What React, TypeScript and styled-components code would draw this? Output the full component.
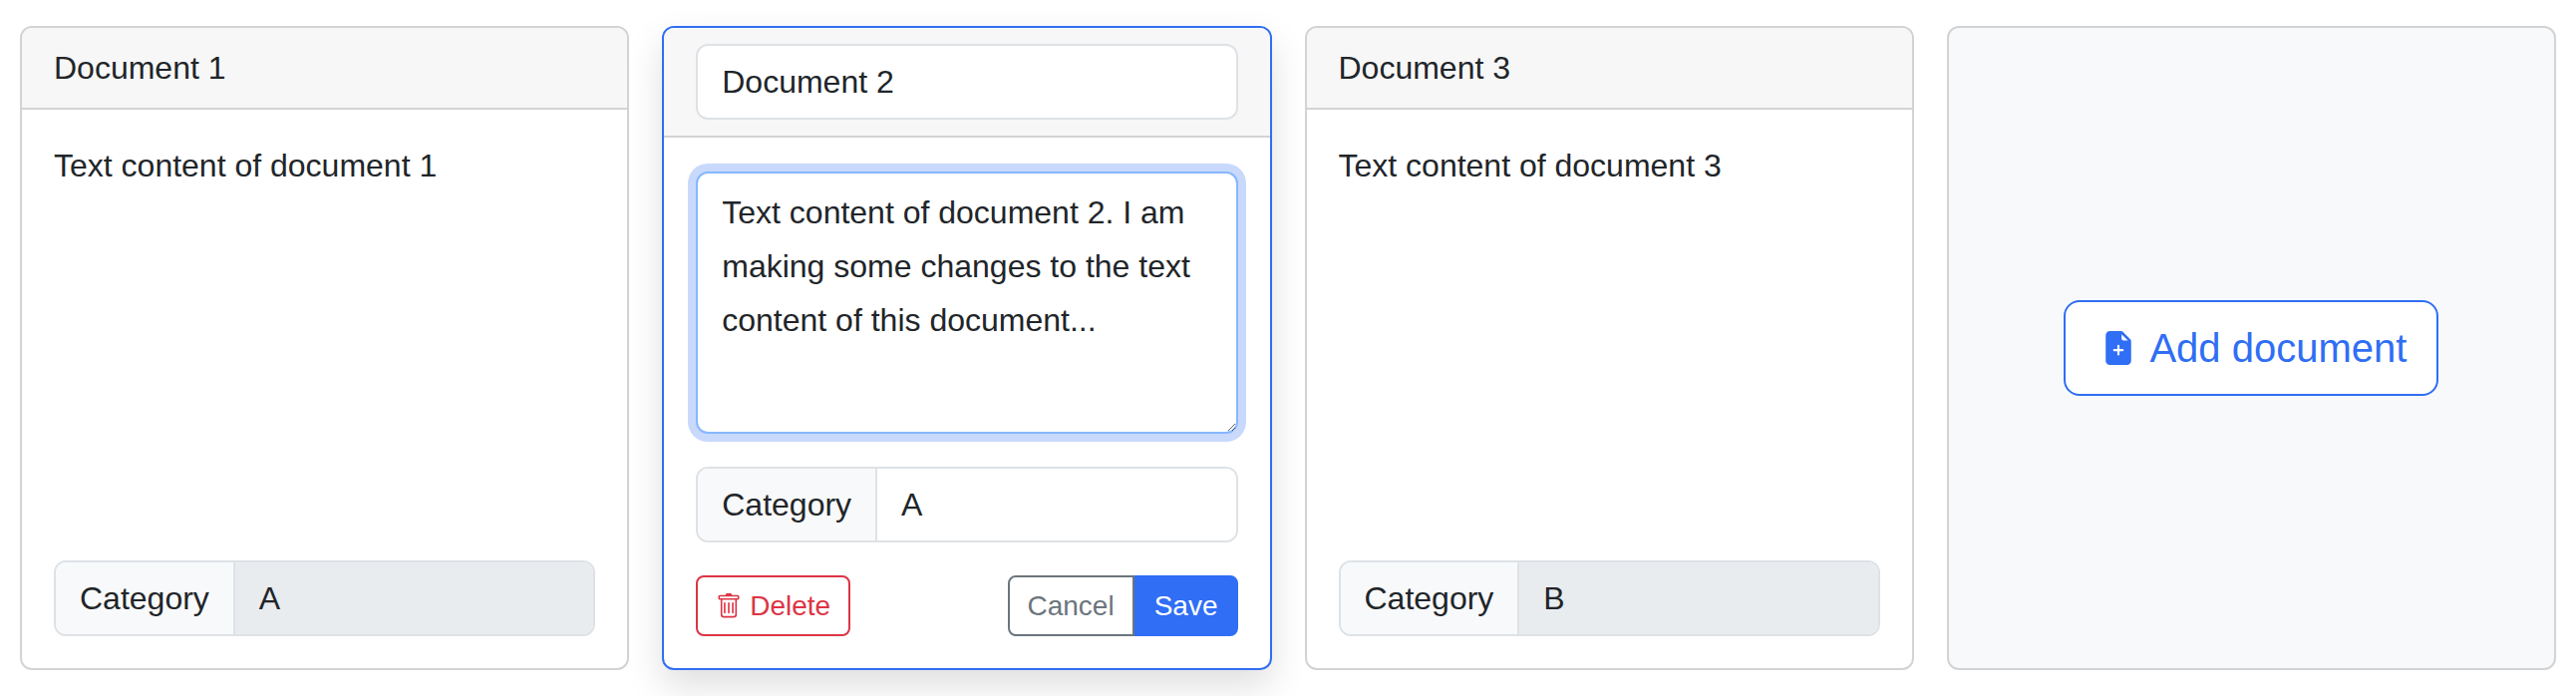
import React from "react";
import styled, { createGlobalStyle } from "styled-components";
import { BsTrash, BsFileEarmarkPlusFill } from "react-icons/bs";

const GlobalStyle = createGlobalStyle`
    body {
        margin: 0;
        background: #fff;
        font-family: "Liberation Sans", Arial, sans-serif;
        color: #212529;
    }
    * { box-sizing: border-box; }
`;

interface Doc {
    title: string;
    text: string;
    category: string;
}

const docs: Doc[] = [
    { title: "Document 1", text: "Text content of document 1", category: "A" },
    { title: "Document 2", text: "Text content of document 2. I am making some changes to the text content of this document...", category: "A" },
    { title: "Document 3", text: "Text content of document 3", category: "B" }
];

export default function App(): React.ReactElement {
    return (
        <>
            <GlobalStyle />
            <Grid>
                <Card>
                    <CardHeader>{docs[0].title}</CardHeader>
                    <CardBody>
                        <BodyText>{docs[0].text}</BodyText>
                        <CategoryGroup value={docs[0].category} disabled />
                    </CardBody>
                </Card>

                <Card $editing>
                    <CardHeader $editing>
                        <TitleInput defaultValue={docs[1].title} />
                    </CardHeader>
                    <CardBody>
                        <TextArea defaultValue={docs[1].text} />
                        <CategoryGroup value={docs[1].category} />
                        <ButtonRow>
                            <DeleteButton>
                                <BsTrash />
                                Delete
                            </DeleteButton>
                            <ButtonGroup>
                                <CancelButton>Cancel</CancelButton>
                                <SaveButton>Save</SaveButton>
                            </ButtonGroup>
                        </ButtonRow>
                    </CardBody>
                </Card>

                <Card>
                    <CardHeader>{docs[2].title}</CardHeader>
                    <CardBody>
                        <BodyText>{docs[2].text}</BodyText>
                        <CategoryGroup value={docs[2].category} disabled />
                    </CardBody>
                </Card>

                <AddCard>
                    <AddButton>
                        <BsFileEarmarkPlusFill />
                        Add document
                    </AddButton>
                </AddCard>
            </Grid>
        </>
    );
}

function CategoryGroup(props: { value: string; disabled?: boolean }): React.ReactElement {
    return (
        <InputGroup>
            <GroupLabel>Category</GroupLabel>
            <GroupValue $disabled={props.disabled}>{props.value}</GroupValue>
        </InputGroup>
    );
}

const Grid = styled.div`
    display: grid;
    grid-template-columns: repeat(4, 1fr);
    gap: 33px;
    padding: 26px 20px;
`;

const Card = styled.div<{ $editing?: boolean }>`
    display: flex;
    flex-direction: column;
    height: 646px;
    border: 2px solid ${(p) => (p.$editing ? "#2f6ef5" : "#d3d3d4")};
    border-radius: 12px;
    background: #fff;
    overflow: hidden;
    box-shadow: ${(p) => (p.$editing ? "0 16px 36px rgba(0, 0, 0, 0.13)" : "none")};
`;

const CardHeader = styled.div<{ $editing?: boolean }>`
    padding: ${(p) => (p.$editing ? "16px 32px" : "16px 32px")};
    background: #f7f7f7;
    border-bottom: 2px solid #d3d3d4;
    font-size: 32px;
    line-height: 48px;
`;

const CardBody = styled.div`
    flex: 1;
    display: flex;
    flex-direction: column;
    padding: 32px;
    gap: 33px;
`;

const BodyText = styled.div`
    flex: 1;
    font-size: 32px;
    line-height: 48px;
`;

const TitleInput = styled.input`
    display: block;
    width: 100%;
    padding: 12px 24px;
    font: inherit;
    font-size: 32px;
    line-height: 48px;
    color: #212529;
    border: 2px solid #dee2e6;
    border-radius: 12px;
    background: #fff;
    outline: none;
`;

const TextArea = styled.textarea`
    flex: 1;
    margin-top: 2px;
    width: 100%;
    padding: 12px 24px;
    font: inherit;
    font-size: 32px;
    line-height: 54px;
    color: #212529;
    border: 2px solid #86b7fe;
    border-radius: 12px;
    box-shadow: 0 0 0 8px #c8d9fc;
    outline: none;
    resize: vertical;
`;

const InputGroup = styled.div`
    display: flex;
    height: 76px;
    border: 2px solid #dee2e6;
    border-radius: 12px;
    overflow: hidden;
    font-size: 32px;
`;

const GroupLabel = styled.div`
    display: flex;
    align-items: center;
    padding: 0 24px;
    background: #f8f9fa;
    border-right: 2px solid #dee2e6;
`;

const GroupValue = styled.div<{ $disabled?: boolean }>`
    flex: 1;
    display: flex;
    align-items: center;
    padding: 0 24px;
    background: ${(p) => (p.$disabled ? "#e9ecef" : "#fff")};
`;

const ButtonRow = styled.div`
    display: flex;
    justify-content: space-between;
    align-items: center;
`;

const SmallButton = styled.button`
    display: inline-flex;
    align-items: center;
    gap: 8px;
    height: 61px;
    padding: 0 18px;
    font-family: inherit;
    font-size: 28px;
    border-radius: 8px;
    background: #fff;
`;

const DeleteButton = styled(SmallButton)`
    color: #dc3545;
    border: 2px solid #dc3545;
    svg { width: 26px; height: 26px; }
`;

const ButtonGroup = styled.div`
    display: flex;
`;

const CancelButton = styled(SmallButton)`
    color: #6c757d;
    border: 2px solid #6c757d;
    border-radius: 8px 0 0 8px;
`;

const SaveButton = styled(SmallButton)`
    color: #fff;
    background: #2f6ef5;
    border: 2px solid #2f6ef5;
    border-radius: 0 8px 8px 0;
`;

const AddCard = styled.div`
    height: 646px;
    display: flex;
    align-items: center;
    justify-content: center;
    background: #f8f9fa;
    border: 2px solid #d3d3d4;
    border-radius: 12px;
`;

const AddButton = styled.button`
    display: inline-flex;
    align-items: center;
    gap: 14px;
    height: 96px;
    padding: 0 30px 0 36px;
    font-family: inherit;
    font-size: 40px;
    color: #2f6ef5;
    background: #fff;
    border: 2px solid #2f6ef5;
    border-radius: 16px;
    svg { width: 34px; height: 40px; }
`;
